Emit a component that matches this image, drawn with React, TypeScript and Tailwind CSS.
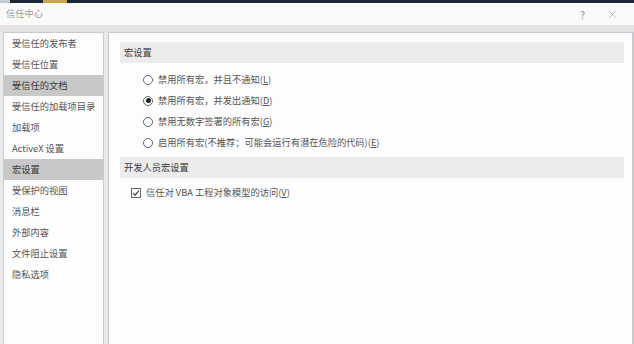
import React from 'react';
import { X } from 'lucide-react';

const navItems = [
  '受信任的发布者',
  '受信任位置',
  '受信任的文档',
  '受信任的加载项目录',
  '加载项',
  'ActiveX 设置',
  '宏设置',
  '受保护的视图',
  '消息栏',
  '外部内容',
  '文件阻止设置',
  '隐私选项',
];

const highlighted = ['受信任的文档', '宏设置'];

const radios = [
  { label: '禁用所有宏，并且不通知', key: 'L', checked: false },
  { label: '禁用所有宏，并发出通知', key: 'D', checked: true },
  { label: '禁用无数字签署的所有宏', key: 'G', checked: false },
  { label: '启用所有宏(不推荐；可能会运行有潜在危险的代码)', key: 'E', checked: false },
];

const Radio = ({ checked }: { checked: boolean }) => (
  <span className="w-[10px] h-[10px] rounded-full border border-[#666] bg-white flex items-center justify-center shrink-0">
    {checked && <span className="w-[5px] h-[5px] rounded-full bg-[#222]" />}
  </span>
);

const SectionHeader = ({ children }: { children: React.ReactNode }) => (
  <div className="h-[21px] bg-[#ececec] flex items-center pl-[4px] text-[#3a3a3a] text-[9.25px]">
    {children}
  </div>
);

export default function App() {
  return (
    <div
      className="w-[634px] h-[344px] overflow-hidden bg-[#e9e9e9] flex flex-col"
      style={{ fontFamily: '"Noto Sans CJK SC", "Noto Sans", sans-serif' }}
    >
      {/* desktop strip behind the window */}
      <div className="h-[3px] bg-[#1c2636] flex shrink-0">
        <div className="w-[10px] bg-[#c9ccd2]" />
        <div className="w-[33px]" />
        <div className="w-[24px] bg-[#c9a64a]" />
      </div>

      {/* title bar */}
      <div className="h-[22px] bg-[#fafafa] flex items-center justify-between pl-[6px] pr-[15px] shrink-0">
        <span className="text-[9.25px] text-[#9a9a9a]">信任中心</span>
        <div className="flex items-center gap-[21px] text-[#8a8a8a]">
          <span className="text-[10px]">?</span>
          <X size={13} strokeWidth={1} />
        </div>
      </div>

      <div className="h-[7px] bg-[#e3e3e3] shrink-0" />

      <div className="flex flex-1 pl-[3px] gap-[4px] min-h-0">
        {/* left nav */}
        <div className="w-[101px] bg-[#fdfdfd] border border-[#c9c9ce] border-b-0">
          {navItems.map((item) => (
            <div
              key={item}
              className={`h-[21px] flex items-center pl-[8px] text-[9.25px] ${
                highlighted.includes(item) ? 'bg-[#c8c8c8] text-[#3a3a3a]' : 'text-[#555]'
              }`}
            >
              {item}
            </div>
          ))}
        </div>

        {/* right content */}
        <div className="flex-1 bg-[#fdfdfd] border border-[#c9c9ce] border-b-0 border-r-[2px] pt-[9px] pl-[11px] pr-[8px]">
          <SectionHeader>宏设置</SectionHeader>
          <div className="mt-[6px] pl-[23px]">
            {radios.map((r) => (
              <div key={r.key} className="h-[21px] flex items-center gap-[5px] text-[9.25px] text-[#555]">
                <Radio checked={r.checked} />
                <span>
                  {r.label}(<span className="underline">{r.key}</span>)
                </span>
              </div>
            ))}
          </div>
          <div className="mt-[4px]">
            <SectionHeader>开发人员宏设置</SectionHeader>
          </div>
          <div className="mt-[4px] h-[21px] flex items-center gap-[5px] pl-[11px] text-[9.25px] text-[#555]">
            <span className="w-[10px] h-[10px] border border-[#666] bg-white flex items-center justify-center shrink-0">
              <svg width="8" height="8" viewBox="0 0 8 8">
                <path d="M1 4.2 L3.1 6.2 L7 1.6" fill="none" stroke="#333" strokeWidth="1.1" />
              </svg>
            </span>
            <span>
              信任对 VBA 工程对象模型的访问(<span className="underline">V</span>)
            </span>
          </div>
        </div>
      </div>
    </div>
  );
}
